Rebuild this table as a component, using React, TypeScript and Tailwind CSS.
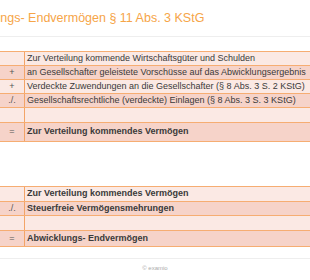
const table1 = [
  { op: "", text: "Zur Verteilung kommende Wirtschaftsgüter und Schulden", dark: false, bold: false, h: "h-[14px]" },
  { op: "+", text: "an Gesellschafter geleistete Vorschüsse auf das Abwicklungsergebnis", dark: true, bold: false, h: "h-[14px]" },
  { op: "+", text: "Verdeckte Zuwendungen an die Gesellschafter (§ 8 Abs. 3 S. 2 KStG)", dark: false, bold: false, h: "h-[14px]" },
  { op: "./.", text: "Gesellschaftsrechtliche (verdeckte) Einlagen (§ 8 Abs. 3 S. 3 KStG)", dark: true, bold: false, h: "h-[14px]" },
  { op: "", text: "", dark: false, bold: false, h: "h-[15px]" },
  { op: "=", text: "Zur Verteilung kommendes Vermögen", dark: true, bold: true, h: "h-[19px]" },
];

const table2 = [
  { op: "", text: "Zur Verteilung kommendes Vermögen", dark: false, bold: true, h: "h-[15px]" },
  { op: "./.", text: "Steuerfreie Vermögensmehrungen", dark: true, bold: true, h: "h-[14px]" },
  { op: "", text: "", dark: false, bold: false, h: "h-[15px]" },
  { op: "=", text: "Abwicklungs- Endvermögen", dark: true, bold: true, h: "h-[16px]" },
];

type Row = (typeof table1)[number];

function Table({ rows }: { rows: Row[] }) {
  return (
    <div className="w-[330px] border-b border-[#f6ad72]">
      {rows.map((r, i) => (
        <div
          key={i}
          className={`flex ${r.h} border-t border-[#f6ad72] ${r.dark ? "bg-[#f6d3c9]" : "bg-[#fbe9e4]"}`}
        >
          <div className="flex w-[25px] shrink-0 items-center justify-center border-r border-[#f3a467] text-[9px] text-[#555]">
            {r.op}
          </div>
          <div
            className={`flex items-center whitespace-nowrap pl-[2px] text-[9px] text-[#3a3a3a] ${r.bold ? "font-bold" : ""}`}
          >
            {r.text}
          </div>
        </div>
      ))}
    </div>
  );
}

export default function App() {
  return (
    <div className="h-[280px] w-[310px] overflow-hidden bg-white font-['Liberation_Sans',Arial,sans-serif]">
      <div className="flex h-[37px] items-center border-b border-[#eeeeee]">
        <h1 className="ml-[-49px] whitespace-nowrap text-[12.5px] text-[#f6a548]">
          Abwicklungs- Endvermögen § 11 Abs. 3 KStG
        </h1>
      </div>
      <div className="pt-[14px]">
        <Table rows={table1} />
      </div>
      <div className="pt-[44px]">
        <Table rows={table2} />
      </div>
      <div className="mt-[11px] flex h-[20px] items-center justify-center border-t border-[#eeeeee] text-[6px] text-[#aaaaaa]">
        © examio
      </div>
    </div>
  );
}
